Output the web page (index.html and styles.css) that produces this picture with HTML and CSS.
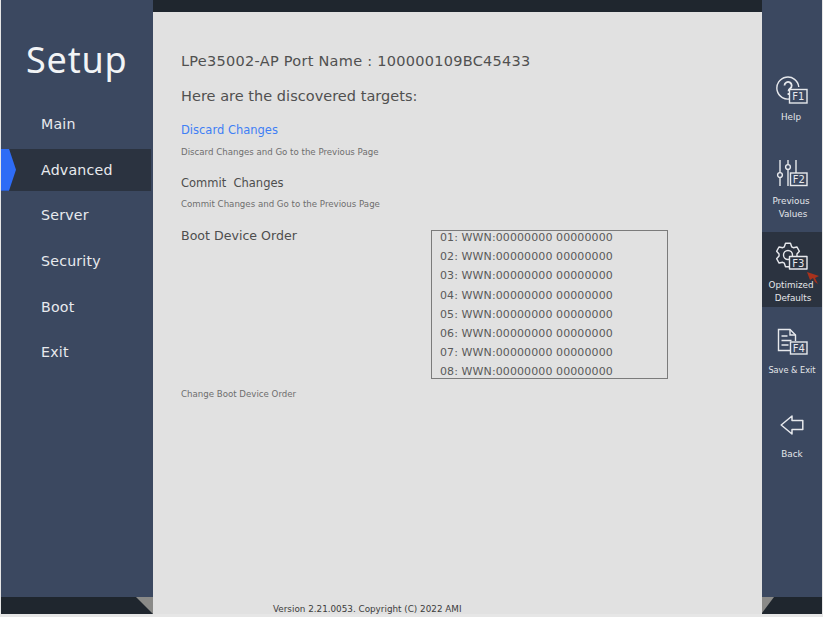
FILE: index.html
```html
<!DOCTYPE html>
<html lang="en">
<head>
<meta charset="utf-8">
<title>Setup</title>
<link rel="stylesheet" href="styles.css">
</head>
<body>
<div class="screen">
  <aside class="left">
    <h1 class="brand">Setup</h1>
    <nav class="nav">
      <a class="nav-item">Main</a>
      <a class="nav-item active">Advanced</a>
      <a class="nav-item">Server</a>
      <a class="nav-item">Security</a>
      <a class="nav-item">Boot</a>
      <a class="nav-item">Exit</a>
    </nav>
    <div class="foot foot-left"></div>
  </aside>
  <main class="main">
    <div class="topbar"></div>
    <div class="content">
      <h2 class="port">LPe35002-AP Port Name : 100000109BC45433</h2>
      <h2 class="targets">Here are the discovered targets:</h2>
      <div class="opt link">Discard Changes</div>
      <p class="hint">Discard Changes and Go to the Previous Page</p>
      <div class="opt">Commit&nbsp; Changes</div>
      <p class="hint hint-tight">Commit Changes and Go to the Previous Page</p>
      <div class="boot-row">
        <div class="opt boot-label">Boot Device Order</div>
        <div class="listbox">
          <div class="li">01: WWN:00000000 00000000</div>
          <div class="li">02: WWN:00000000 00000000</div>
          <div class="li">03: WWN:00000000 00000000</div>
          <div class="li">04: WWN:00000000 00000000</div>
          <div class="li">05: WWN:00000000 00000000</div>
          <div class="li">06: WWN:00000000 00000000</div>
          <div class="li">07: WWN:00000000 00000000</div>
          <div class="li">08: WWN:00000000 00000000</div>
        </div>
      </div>
      <p class="hint change">Change Boot Device Order</p>
    </div>
    <div class="version">Version 2.21.0053. Copyright (C) 2022 AMI</div>
  </main>
  <aside class="right">
    <div class="fn fn-help">
      <svg class="ic" viewBox="0 0 32 28" fill="none" stroke="#e6e8ec" stroke-width="1.4">
        <path d="M15 22.600A11 11 0 1 1 22.800 11"/>
        <path d="M8.500 9.500a3.600 3.600 0 1 1 5.600 3c-1.200.8-1.600 1.500-1.600 2.800" stroke-width="1.800"/>
        <path d="M12.500 17v2" stroke-width="1.800"/>
        <rect class="key" x="13.500" y="13.500" width="17.500" height="13.500"/>
        <text class="key-t" x="22.300" y="24.300">F1</text>
      </svg>
      <span class="fn-label">Help</span>
    </div>
    <div class="fn fn-prev">
      <svg class="ic" viewBox="0 0 32 28" fill="none" stroke="#e6e8ec" stroke-width="1.400">
        <path d="M4 1v12.500M4 18.500V27M12 1v4.500M12 10.500V27M20 1v13"/>
        <circle cx="4" cy="16" r="2.400"/>
        <circle cx="12" cy="8" r="2.400"/>
        <rect class="key" x="14.500" y="14" width="16.500" height="12.500"/>
        <text class="key-t" x="22.800" y="24">F2</text>
      </svg>
      <span class="fn-label">Previous<br><span class="indent">Values</span></span>
    </div>
    <div class="fn fn-opt">
      <svg class="ic" viewBox="0 0 32 28" fill="none" stroke="#e6e8ec" stroke-width="1.400" stroke-linejoin="round">
        <path d="M8.340 4.780 9.510 1.260H14.490L15.660 4.780 17.290 5.720 20.920 4.970 23.410 9.290 20.950 12.060V13.940L23.410 16.710 20.920 21.030 17.290 20.280 15.660 21.220 14.490 24.740H9.510L8.340 21.220 6.710 20.280 3.080 21.030.59 16.710 3.050 13.940V12.060L.59 9.290 3.080 4.970 6.710 5.720Z"/>
        <circle cx="12" cy="13" r="4.500"/>
        <rect class="key" x="13.500" y="14.500" width="17.500" height="12.500"/>
        <text class="key-t" x="22.300" y="24.500">F3</text>
      </svg>
      <span class="fn-label">Optimized<br><span class="indent">Defaults</span></span>
      <svg class="cursor" viewBox="0 0 14 14"><path d="M1 1l12 4-4 2 3 6-3-2-2-4-3 2z" fill="#a8321c"/></svg>
    </div>
    <div class="fn fn-save">
      <svg class="ic" viewBox="0 0 32 28" fill="none" stroke="#e6e8ec" stroke-width="1.400">
        <path d="M14 22.500H2.500V1.500H14L19.500 7v6"/>
        <path d="M14 1.500V7h5.500"/>
        <path d="M5.500 8h6M5.500 12.500h10M5.500 17h7"/>
        <rect class="key" x="14.500" y="14" width="16.500" height="12"/>
        <text class="key-t" x="22.800" y="23.500">F4</text>
      </svg>
      <span class="fn-label fn-label-save">Save &amp; Exit</span>
    </div>
    <div class="fn fn-back">
      <svg class="ic-back" viewBox="0 0 24 20" fill="none" stroke="#e6e8ec" stroke-width="1.500" stroke-linejoin="round">
        <path d="M1.200 10 12 1V5.500H22.800V14.500H12V19Z"/>
      </svg>
      <span class="fn-label fn-label-back">Back</span>
    </div>
    <div class="foot foot-right"></div>
  </aside>
</div>
</body>
</html>
```
FILE: styles.css
```css
* { box-sizing: border-box; }
html, body { margin: 0; background: #e6e6e6; }
body { width: 823px; height: 617px; overflow: hidden; font-family: "DejaVu Sans", sans-serif; }
.screen { display: flex; width: 821px; height: 614px; margin-left: 1px; }

.left { width: 152px; background: #3b4860; display: flex; flex-direction: column; }
.brand { margin: 39px 0 0 25px; font: 400 36px/42px "Noto Sans", sans-serif; color: #f2f4f6; letter-spacing: .8px; }
.nav { margin-top: 22px; flex: 1; display: flex; flex-direction: column; }
.nav-item { height: 42px; margin-bottom: 3.700px; padding-left: 40px; font-size: 14.200px; line-height: 43px; color: #e8eaee; letter-spacing: .2px; position: relative; }
.nav-item.active { background: #2b3340; margin-right: 2px; }
.nav-item.active::before { content: ""; position: absolute; left: 0; top: 0; width: 15px; height: 42px; background: #2e6cf6; clip-path: polygon(0 0, 8px 0, 15px 50%, 8px 100%, 0 100%); }
.foot { height: 17px; flex: none; background: #1f262e; position: relative; }
.foot::after { content: ""; position: absolute; top: 0; background: #8a8a88; }
.foot-left::after { right: 0; width: 17px; height: 17px; clip-path: polygon(0 0, 100% 0, 100% 100%); }
.foot-right::after { left: 0; width: 12px; height: 16px; clip-path: polygon(0 0, 100% 0, 0 100%); }

.main { width: 609px; background: #e1e1e1; display: flex; flex-direction: column; }
.topbar { height: 12px; background: #1f262e; flex: none; }
.content { flex: 1; padding: 38px 0 0 28px; color: #505050; }
h2 { margin: 0; font-weight: 400; }
.port { font-size: 14.500px; line-height: 22px; letter-spacing: .27px; }
.targets { font-size: 14.500px; line-height: 22px; margin-top: 13px; letter-spacing: .03px; }
.opt { font-size: 11.500px; line-height: 18px; color: #4e4e4e; }
.opt.link { color: #3f7ff5; margin-top: 14px; }
.hint { margin: 7px 0 16px; font-size: 8.650px; line-height: 12px; color: #6e6e6e; }
.hint-tight { margin-top: 6px; }
.boot-row { display: flex; }
.boot-label { width: 250px; padding-top: 1px; font-size: 12.600px; }
.listbox { width: 237px; height: 149px; margin-top: 4px; border: 1px solid #7b7b7b; padding: 1px 0 0 8px; display: flex; flex-direction: column; gap: 7.200px; overflow: hidden; }
.li { font-size: 11px; line-height: 12px; color: #5a5a5a; white-space: nowrap; letter-spacing: .1px; }
.hint.change { margin-top: 9px; }
.version { height: 17px; padding-left: 120px; font-size: 8.800px; line-height: 24px; color: #3c3c3c; overflow: hidden; }

.right { width: 60px; background: #3b4860; display: flex; flex-direction: column; align-items: stretch; }
.fn { display: flex; flex-direction: column; align-items: center; position: relative; }
.fn-label { font-size: 8.800px; line-height: 13px; color: #e4e6ea; text-align: center; white-space: nowrap; margin-right: 2px; }
.fn-label-save { font-size: 8.200px; margin-right: 0; }
.fn-label-back { margin-right: 0; }
.indent { margin-left: 4px; }
.ic { width: 32px; height: 28px; flex: none; }
.ic-back { width: 24px; height: 20px; flex: none; }
.key { fill: #3b4860; }
.fn-opt .key { fill: #2b3340; }
.key-t { fill: #e6e8ec; stroke: none; font: 10px "DejaVu Sans", sans-serif; text-anchor: middle; }
.fn-help { margin-top: 76px; height: 50px; gap: 7px; }
.fn-prev { margin-top: 33px; height: 73px; gap: 8px; }
.fn-opt { height: 75px; background: #2b3340; padding-top: 10px; gap: 9px; }
.fn-save { margin-top: 21px; height: 60px; gap: 8px; }
.fn-back { margin-top: 27px; gap: 13px; }
.fn-back + .foot { margin-top: auto; }
.cursor { position: absolute; width: 14px; height: 14px; left: 44px; top: 39px; }
```
